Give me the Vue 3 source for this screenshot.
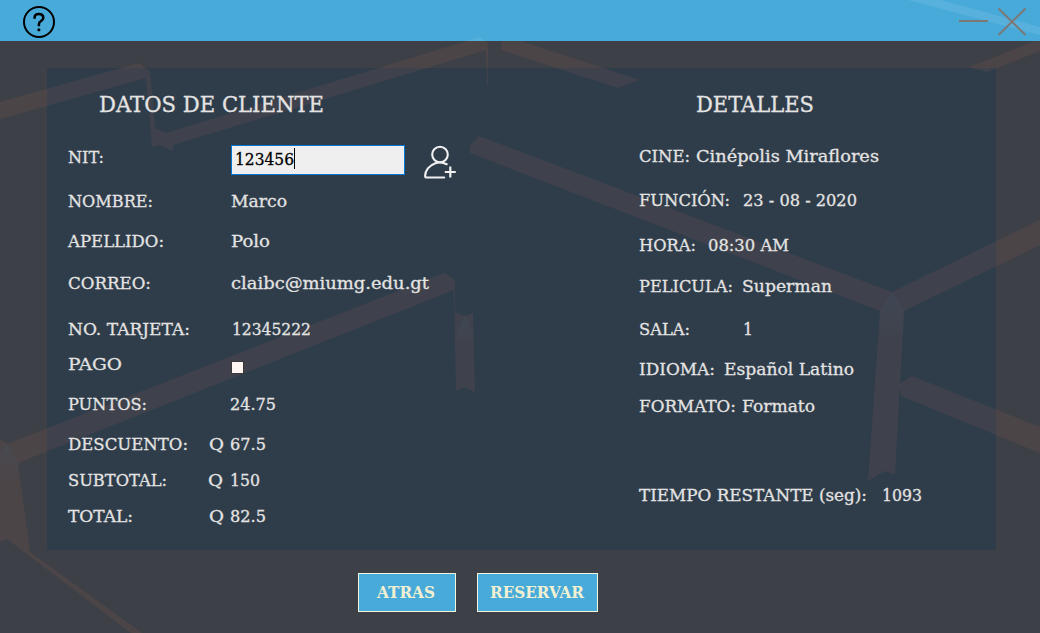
<script setup>
const client = [
  { label: 'NIT:', w: 36, h: 49, input: '123456' },
  { label: 'NOMBRE:', w: 85, h: 44, value: 'Marco', vw: 56, x: 231 },
  { label: 'APELLIDO:', w: 96, h: 40, value: 'Polo', vw: 39, x: 231 },
  { label: 'CORREO:', w: 83, h: 42, value: 'claibc@miumg.edu.gt', vw: 198, x: 231 },
  { label: 'NO. TARJETA:', w: 122, h: 46, value: '12345222', vw: 79, x: 232 },
  { label: 'PAGO', w: 54, h: 35, check: true },
  { label: 'PUNTOS:', w: 79, h: 40, value: '24.75', vw: 46, x: 230 },
  { label: 'DESCUENTO:', w: 120, h: 40, q: 209, value: '67.5', vw: 36, x: 230 },
  { label: 'SUBTOTAL:', w: 99, h: 36, q: 208, value: '150', vw: 30, x: 230 },
  { label: 'TOTAL:', w: 65, h: 36, q: 209, value: '82.5', vw: 36, x: 230 },
]
const details = [
  { label: 'CINE:', w: 51, h: 48, value: 'Cinépolis Miraflores', vw: 183, x: 696 },
  { label: 'FUNCIÓN:', w: 91, h: 44, value: '23 - 08 - 2020', vw: 114, x: 743 },
  { label: 'HORA:', w: 57, h: 45, value: '08:30 AM', vw: 81, x: 708 },
  { label: 'PELICULA:', w: 94, h: 41, value: 'Superman', vw: 90, x: 742 },
  { label: 'SALA:', w: 51, h: 43, value: '1', vw: 10, x: 743 },
  { label: 'IDIOMA:', w: 76, h: 40, value: 'Español Latino', vw: 130, x: 724 },
  { label: 'FORMATO:', w: 97, h: 37, value: 'Formato', vw: 73, x: 742 },
  { label: 'TIEMPO RESTANTE (seg):', w: 228, h: 89, value: '1093', vw: 40, x: 882 },
]
// Stretches a line of text horizontally to the given width.
const vFit = {
  mounted(el, { value }) {
    const natural = el.getBoundingClientRect().width
    el.style.transform = `scaleX(${value / natural})`
  },
}
</script>

<template>
  <div class="window">
    <header class="bar">
      <svg class="help" width="34" height="34" viewBox="0 0 34 34">
        <circle cx="17" cy="17" r="15" fill="none" stroke="#000" stroke-width="2" />
        <path d="M12.6 13.7v-1.1c0-2 1.600-3.500 4.200-3.500 2.700 0 4.500 1.500 4.500 3.800 0 2.800-4.400 3.300-4.400 6v2.400" fill="none" stroke="#000" stroke-width="2.5" />
        <rect x="15.5" y="23.4" width="2.8" height="2.8" rx=".6" />
      </svg>
      <svg class="controls" width="132" height="41" viewBox="908 0 132 41">
        <path d="M908 0h32l100 27v8z" fill="#fff" opacity=".09" />
        <path d="M959 21h29" stroke="#7c7876" stroke-width="2" />
        <path d="M998.5 8.5l27 26.5M1025.5 8.5l-27 26.5" stroke="#7c7876" stroke-width="2" />
      </svg>
    </header>

    <main class="panel">
      <section class="client">
        <h2 class="title"><span v-fit="225" class="fit">DATOS DE CLIENTE</span></h2>
        <div v-for="r in client" :key="r.label" class="row" :style="{ height: r.h + 'px' }">
          <div class="label" :style="{ width: (r.q || r.x || 231) - 68 + 'px' }">
            <span v-fit="r.w" class="fit">{{ r.label }}</span>
          </div>
          <template v-if="r.input">
            <div class="field"><span v-fit="59" class="fit">{{ r.input }}</span><i class="caret" /></div>
            <svg class="add" width="34" height="34" viewBox="423 145 34 34" fill="none" stroke="#f0f0f0" stroke-width="2.1">
              <circle cx="440" cy="154.5" r="7.8" />
              <path d="M446.7 164.2c-3-1.6-8-2.1-11.3-1-6.300 2.100-10.300 7.500-10.300 12.800 0 1 .7 1.500 1.700 1.500h17.400" stroke-linecap="round" />
              <path d="M450.3 166.5v11M444.8 172h11" stroke-width="2.2" />
            </svg>
          </template>
          <i v-else-if="r.check" class="check" />
          <template v-else>
            <div v-if="r.q" class="label" :style="{ width: r.x - r.q + 'px' }"><span v-fit="15" class="fit">Q</span></div>
            <div class="label"><span v-fit="r.vw" class="fit">{{ r.value }}</span></div>
          </template>
        </div>
      </section>
      <section class="details">
        <h2 class="title"><span v-fit="118" class="fit">DETALLES</span></h2>
        <div v-for="r in details" :key="r.label" class="row" :style="{ height: r.h + 'px' }">
          <div class="label" :style="{ width: r.x - 639 + 'px' }"><span v-fit="r.w" class="fit">{{ r.label }}</span></div>
          <div class="label"><span v-fit="r.vw" class="fit">{{ r.value }}</span></div>
        </div>
      </section>
    </main>

    <footer class="actions">
      <button class="btn back"><span v-fit="58" class="fit">ATRAS</span></button>
      <button class="btn reserve"><span v-fit="94" class="fit">RESERVAR</span></button>
    </footer>

    <svg class="ribbons" width="1040" height="633" viewBox="0 0 1040 633">
      <g fill="#b46454" fill-opacity=".13">
        <path d="M0 102L139 63 150 71 146 78 0 119z" />
        <path d="M146 78L150 71 155 128 166 133 467 41H485L488 43V86H487L486 50 173 145V151L160 145 152 147z" />
        <path d="M467 41L480 37 485 41z" fill="#fff" fill-opacity=".07" />
        <path d="M501 43L503 41H520L640 80 618 88 501 50z" />
        <path d="M969 67L1035 41H1040V51L987 72z" />
        <path d="M479 136L892 292 1040 220V245L904 311 895 475 885 471 868 481 880 311 470 153V146z" />
        <path d="M899 384L912 376 1040 427V453L901 396z" />
        <path d="M0 439L7 444 444 273 455 280V312L465 316 473 313 475 392 465 387 456 391 454 290 18 463 30 552 142 633H131L7 539 0 542z" />
      </g>
      <defs>
        <linearGradient id="fade" x1="0" y1="0" x2="0" y2="1">
          <stop offset="0" stop-color="#3f5468" stop-opacity=".3" />
          <stop offset="1" stop-color="#3f5468" stop-opacity="0" />
        </linearGradient>
      </defs>
      <g fill="url(#fade)">
        <path d="M892 292L904 311V340H880V311z" />
        <path d="M465 316L473 332V345H457V332z" />
        <path d="M7 444L18 463V480H0V452z" />
      </g>
    </svg>
  </div>
</template>

<style>
body { margin: 0; overflow: hidden; }
</style>

<style scoped>
* { box-sizing: border-box; }
.window {
  position: relative;
  width: 1040px;
  height: 633px;
  overflow: hidden;
  background: #3d4147;
  color: #e4e3e2;
  font-family: "DejaVu Serif", "Liberation Serif", serif;
  font-size: 17.3px;
  -webkit-text-stroke: 0.3px currentColor;
}
.bar { height: 41px; background: #48aad9; display: flex; justify-content: space-between; }
.help { margin: 5px 0 0 22px; }
.panel {
  width: 949px;
  height: 482px;
  margin: 27px 0 0 47px;
  background: #2f3d4b;
  display: flex;
}
.client { width: 571px; padding-left: 21px; flex: none; }
.details { padding-left: 21px; }
.title {
  margin: 0;
  height: 52px;
  padding-top: 20px;
  font-size: 23px;
  font-weight: 400;
  line-height: 32px;
}
.client .title { padding-left: 31px; }
.details .title { padding-left: 57px; }
.row { display: flex; align-items: flex-end; }
.label { height: 24px; line-height: 24px; flex: none; }
.fit {
  position: relative;
  z-index: 1;
  display: inline-block;
  white-space: nowrap;
  transform-origin: 0 50%;
}
.label .fit, .title .fit { display: table; }
.field {
  width: 174px;
  height: 30px;
  margin-bottom: -6px;
  padding-left: 3px;
  border: 1px solid #0078d7;
  background: #efefef;
  color: #000;
  line-height: 26px;
  position: relative;
}
.caret { position: absolute; left: 62px; top: 2px; width: 1px; height: 21px; background: #000; }
.add { margin: 0 0 -10px 18px; }
.check { width: 13px; height: 13px; margin-bottom: 2px; border: 1px solid #3b3737; background: #fff5f2; position: relative; z-index: 1; }
.actions { display: flex; gap: 21px; margin: 23px 0 0 358px; }
.btn {
  height: 39px;
  padding: 0;
  border: 1px solid #f5f5dc;
  background: #48aad9;
  color: #f2f0d2;
  font: bold 17.3px/37px "DejaVu Serif", "Liberation Serif", serif;
  -webkit-text-stroke: 0;
  text-align: left;
}
.back { width: 98px; padding-left: 18px; }
.reserve { width: 121px; padding-left: 12px; }
.ribbons { position: absolute; left: 0; top: 0; pointer-events: none; }
</style>
